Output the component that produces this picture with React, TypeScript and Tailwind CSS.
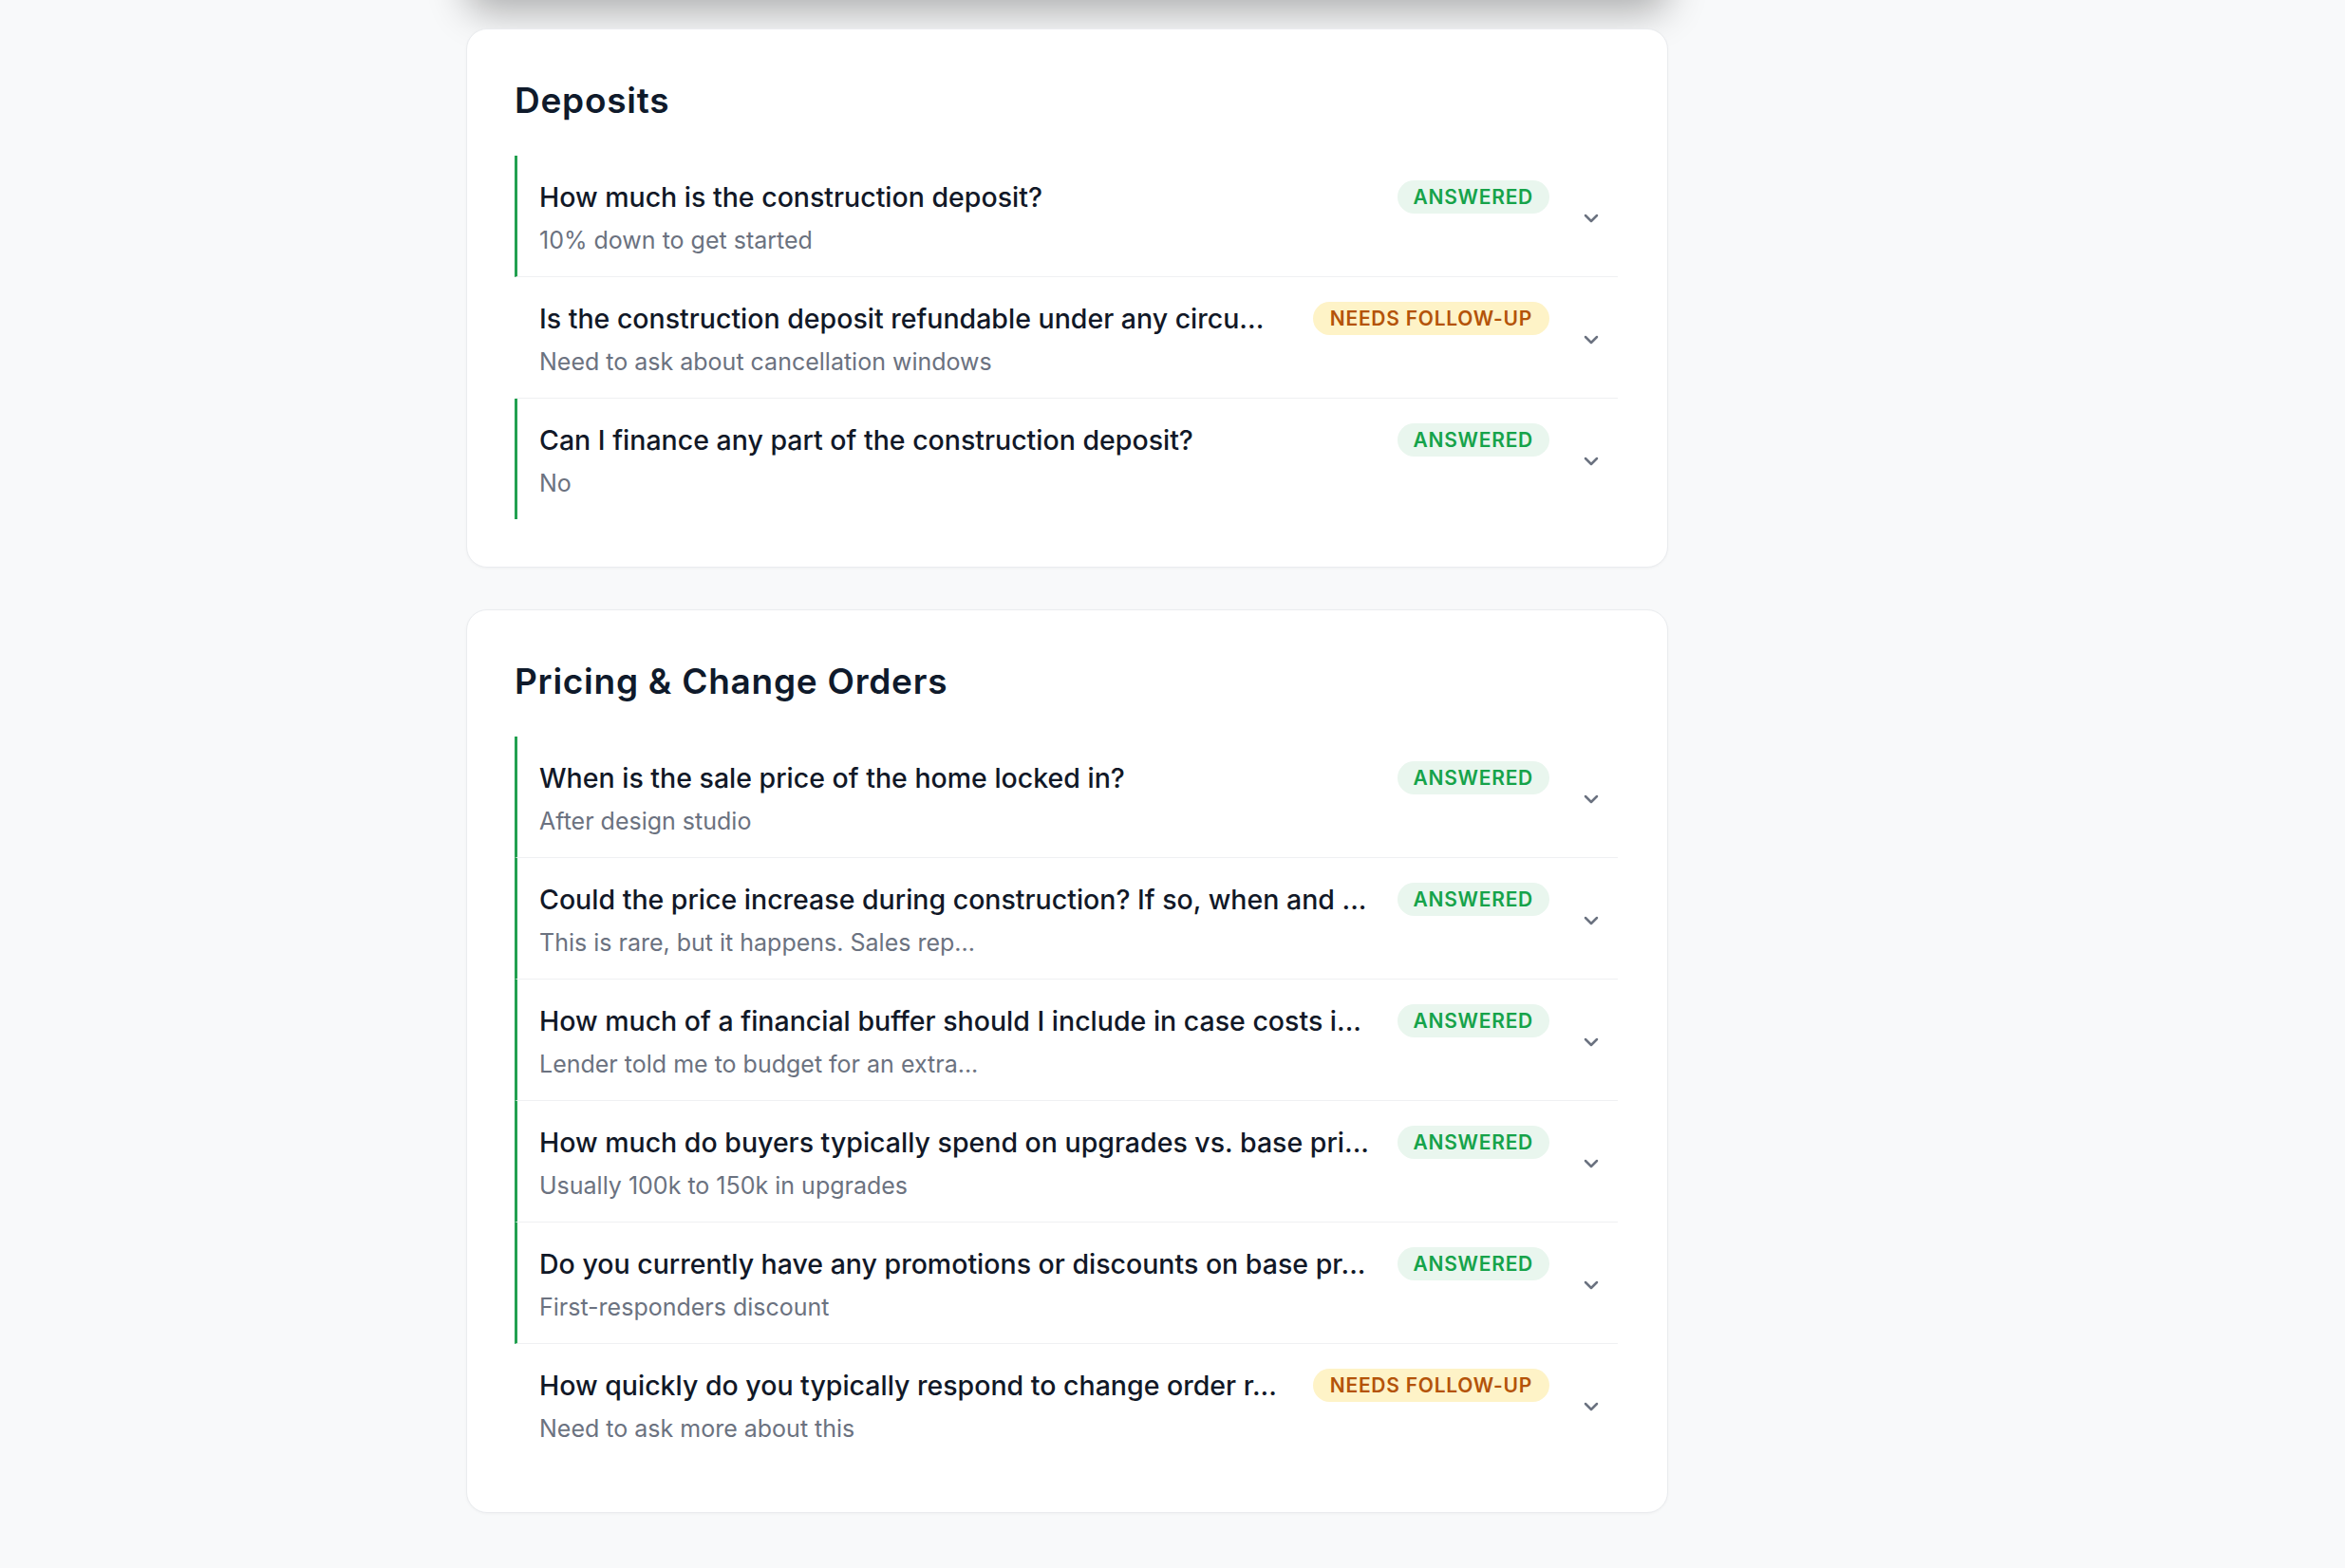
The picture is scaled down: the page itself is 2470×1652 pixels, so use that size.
import React from "react";
import { ChevronDown } from "lucide-react";

type Q = { q: string; a: string; status: "answered" | "followup" };

const sections: { title: string; items: Q[] }[] = [
  {
    title: "Deposits",
    items: [
      { q: "How much is the construction deposit?", a: "10% down to get started", status: "answered" },
      { q: "Is the construction deposit refundable under any circu...", a: "Need to ask about cancellation windows", status: "followup" },
      { q: "Can I finance any part of the construction deposit?", a: "No", status: "answered" },
    ],
  },
  {
    title: "Pricing & Change Orders",
    items: [
      { q: "When is the sale price of the home locked in?", a: "After design studio", status: "answered" },
      { q: "Could the price increase during construction? If so, when and ...", a: "This is rare, but it happens. Sales rep...", status: "answered" },
      { q: "How much of a financial buffer should I include in case costs i...", a: "Lender told me to budget for an extra...", status: "answered" },
      { q: "How much do buyers typically spend on upgrades vs. base pri...", a: "Usually 100k to 150k in upgrades", status: "answered" },
      { q: "Do you currently have any promotions or discounts on base pr...", a: "First-responders discount", status: "answered" },
      { q: "How quickly do you typically respond to change order r...", a: "Need to ask more about this", status: "followup" },
    ],
  },
];

function Badge({ status }: { status: Q["status"] }) {
  if (status === "answered") {
    return (
      <span className="shrink-0 h-[35px] px-[17px] flex items-center rounded-full bg-[#e9f6ee] text-[#16a34a] text-[21px] font-semibold tracking-[0.035em] leading-none">
        ANSWERED
      </span>
    );
  }
  return (
    <span className="shrink-0 h-[35px] px-[18px] flex items-center rounded-full bg-[#fef3c7] text-[#b45309] text-[21px] font-semibold tracking-[0.035em] leading-none">
      NEEDS FOLLOW-UP
    </span>
  );
}

function Row({ item, last }: { item: Q; last: boolean }) {
  const answered = item.status === "answered";
  return (
    <div
      className={
        "flex items-center gap-8 border-l-[3px] pl-[23px] pr-[16px] pt-[26px] pb-[22px] " +
        (answered ? "border-l-[#22a050] " : "border-l-transparent ") +
        (last ? "" : "border-b border-b-[#eff0f2]")
      }
    >
      <div className="flex-1 min-w-0">
        <div className="flex items-start gap-6">
          <p className="flex-1 min-w-0 whitespace-nowrap overflow-hidden text-[28.5px] leading-[36px] text-[#111827] font-medium">{item.q}</p>
          <Badge status={item.status} />
        </div>
        <p className="mt-[11px] text-[25px] leading-[32px] text-[#6b7280] whitespace-nowrap overflow-hidden">{item.a}</p>
      </div>
      <ChevronDown size={24} strokeWidth={2.5} className="shrink-0 text-[#6b7280]" />
    </div>
  );
}

export default function App() {
  return (
    <div className="min-h-screen bg-[#f8f9fa] overflow-hidden" style={{ fontFamily: "Inter, 'Noto Sans', sans-serif" }}>
      <div className="ml-[491px] w-[1266px] flex flex-col">
        <div className="-mt-[205px] h-[200px] rounded-[22px] bg-white shadow-[0_18px_40px_rgba(0,0,0,0.3)]" />
        <div className="mt-[35px] flex flex-col gap-[44px] pb-[61px]">
          {sections.map((s) => (
            <section
              key={s.title}
              className="bg-white rounded-[22px] border border-[#eaecef] shadow-[0_1px_3px_rgba(0,0,0,0.04)] pt-[54px] pb-[50px] pl-[50px] pr-[52px]"
            >
              <h2 className="text-[37px] leading-[42px] font-semibold text-[#0f1a2b] tracking-[0.02em]">{s.title}</h2>
              <div className="mt-[37px] flex flex-col">
                {s.items.map((it, i) => (
                  <Row key={i} item={it} last={i === s.items.length - 1} />
                ))}
              </div>
            </section>
          ))}
        </div>
      </div>
    </div>
  );
}
